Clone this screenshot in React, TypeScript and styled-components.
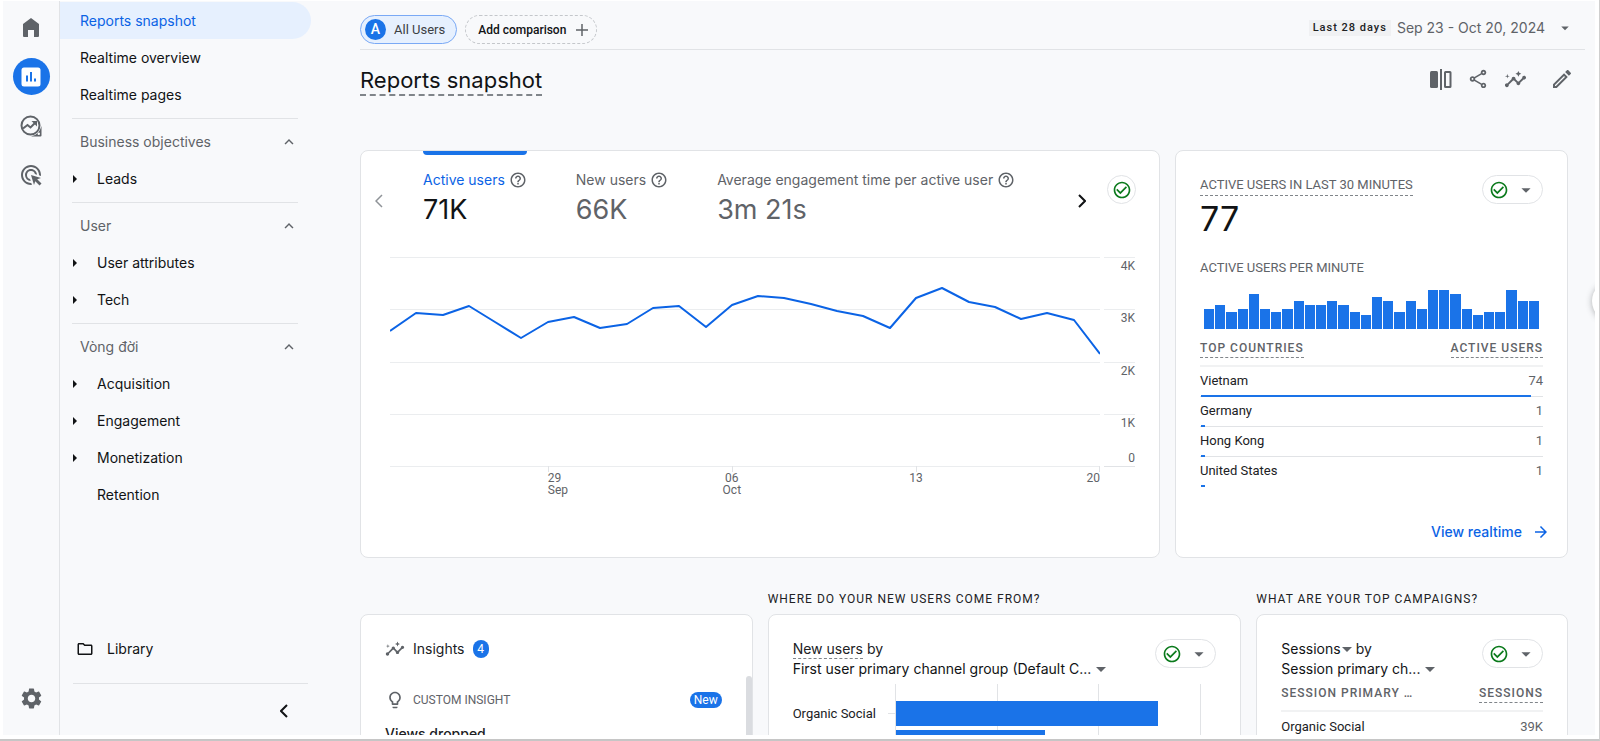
import React from "react";
import styled, { createGlobalStyle, css } from "styled-components";
import {
  MdAdsClick,
  MdArrowDropDown,
  MdArrowForward,
  MdCheckCircleOutline,
  MdExpandLess,
  MdHelpOutline,
  MdInsights,
  MdOutlineEdit,
  MdOutlineFolder,
  MdOutlineLightbulb,
  MdOutlineShare,
  MdSettings,
} from "react-icons/md";

const sans = `Inter, "Open Sans", sans-serif`;
const roboto = `Roboto, "Noto Sans", sans-serif`;

const color = {
  page: "#f8f9fb",
  ink: "#111315",
  text: "#202124",
  muted: "#5f6368",
  line: "#e1e3e6",
  faint: "#ebedef",
  blue: "#1a73e8",
  link: "#0b63e5",
  tint: "#e6f0fe",
  green: "#0b7a1c",
};

const GlobalStyle = createGlobalStyle`
  *, *::before, *::after { box-sizing: border-box; }
  body { margin: 0; background: #fff; }
  button { font: inherit; color: inherit; background: none; border: 0; padding: 0; cursor: pointer; }
  a { color: inherit; text-decoration: none; }
  h1, h2, h3, p, ul { margin: 0; padding: 0; font-weight: 400; list-style: none; }
  svg { display: block; flex: none; }
`;

/* ---------- frame ---------- */

const Frame = styled.div`
  height: 100vh;
  padding: 1px 4px 4px 3px;
  border-right: 1px solid #cfcfcf;
  border-bottom: 2px solid #c6c6c6;
  background: #fff;
`;

const Shell = styled.div`
  position: relative;
  display: flex;
  height: 100%;
  overflow: hidden;
  background: ${color.page};
  color: ${color.text};
  font: 400 14px/20px ${sans};
`;

/* ---------- icon rail ---------- */

const Rail = styled.nav`
  flex: none;
  width: 57px;
  display: flex;
  flex-direction: column;
  align-items: center;
  gap: 12px;
  padding: 8px 0 18px;
  border-right: 1px solid ${color.line};
`;

const RailButton = styled.button<{ $active?: boolean; $last?: boolean }>`
  display: grid;
  place-items: center;
  width: 37px;
  height: 37px;
  border-radius: 50%;
  color: ${(p) => (p.$active ? "#fff" : color.muted)};
  background: ${(p) => (p.$active ? color.blue : "transparent")};
  ${(p) => p.$last && css`margin-top: auto;`}
`;

/* ---------- side navigation ---------- */

const Side = styled.nav`
  flex: none;
  width: 251px;
  display: flex;
  flex-direction: column;
  padding-top: 1px;
  color: ${color.ink};
`;

const NavLink = styled.a<{ $active?: boolean }>`
  display: flex;
  align-items: center;
  height: 37px;
  padding-left: 20px;
  border-radius: 0 19px 19px 0;
  color: ${(p) => (p.$active ? color.link : "inherit")};
  background: ${(p) => (p.$active ? color.tint : "transparent")};
`;

const Group = styled.section`
  margin: 5px 13px 0 12px;
  padding-top: 4px;
  border-top: 1px solid ${color.line};
`;

const GroupHeader = styled.button`
  display: flex;
  align-items: center;
  justify-content: space-between;
  width: 100%;
  height: 37px;
  padding: 0 0 0 8px;
  color: ${color.muted};
`;

const GroupItem = styled.button<{ $leaf?: boolean }>`
  display: flex;
  align-items: center;
  gap: 20px;
  width: 100%;
  height: 37px;
  padding-left: 1px;
  &::before {
    content: "";
    border: 4px solid transparent;
    border-left-color: ${(p) => (p.$leaf ? "transparent" : color.ink)};
    border-right-width: 0;
  }
`;

const SideFoot = styled.div`
  display: flex;
  flex-direction: column;
  margin: auto 3px 0 13px;
`;

const Library = styled.a`
  display: flex;
  align-items: center;
  gap: 13px;
  height: 37px;
  margin-bottom: 16px;
  padding-left: 3px;
`;

const Collapse = styled.button`
  display: flex;
  justify-content: flex-end;
  align-items: center;
  height: 52px;
  padding: 3px 20px 0 0;
  border-top: 1px solid ${color.line};
`;

/* ---------- main column ---------- */

const Main = styled.main`
  flex: 1;
  min-width: 0;
  padding-left: 49px;
`;

const CompareBar = styled.div`
  display: flex;
  align-items: center;
  gap: 8px;
  height: 49px;
  margin-right: 10px;
  padding: 9px 11px 0 0;
  border-bottom: 1px solid ${color.line};
`;

const Chip = styled.button<{ $dashed?: boolean }>`
  display: flex;
  align-items: center;
  gap: 8px;
  height: 29px;
  padding: ${(p) => (p.$dashed ? "0 6px 0 12px" : "0 11px 0 4px")};
  border: 1px ${(p) => (p.$dashed ? "dashed #c4c7cb" : "solid #7aa9f5")};
  border-radius: 15px;
  background: ${(p) => (p.$dashed ? "transparent" : color.tint)};
  font: ${(p) => (p.$dashed ? "500 12px" : "400 13px")} / 20px ${roboto};
  color: ${(p) => (p.$dashed ? color.ink : "#3c4043")};
`;

const ChipBadge = styled.span`
  width: 21px;
  height: 21px;
  border-radius: 50%;
  background: ${color.blue};
  color: #fff;
  font: 500 14px/21px ${roboto};
  text-align: center;
`;

const DatePicker = styled.button`
  display: flex;
  align-items: center;
  gap: 6px;
  margin: -3px 0 0 auto;
  color: ${color.muted};
`;

const DateTag = styled.span`
  padding: 0 4px;
  background: #f0f1f3;
  color: ${color.text};
  font: 500 11px/16px ${roboto};
  letter-spacing: 1px;
`;

const DateRange = styled.span`
  margin-right: 5px;
`;

const TitleRow = styled.header`
  display: flex;
  align-items: flex-start;
  justify-content: space-between;
  height: 100px;
  margin-right: 21px;
  padding-top: 16px;
`;

const Title = styled.h1`
  border-bottom: 2px dashed #80858a;
  color: ${color.ink};
  font: 400 22px/28px ${sans};
`;

const Tools = styled.div`
  display: flex;
  align-items: center;
  gap: 13px;
  height: 26px;
  color: ${color.muted};
`;

const ToolButton = styled.button<{ $apart?: boolean }>`
  display: grid;
  place-items: center;
  width: 24px;
  height: 24px;
  ${(p) => p.$apart && css`margin-left: 10px;`}
`;

const Row = styled.div<{ $cols: string }>`
  display: grid;
  grid-template-columns: ${(p) => p.$cols};
  gap: 15px;
  margin-right: 27px;
`;

const Card = styled.section`
  display: flex;
  flex-direction: column;
  min-width: 0;
  overflow: hidden;
  border: 1px solid ${color.line};
  border-radius: 8px;
  background: #fff;
`;

/* ---------- overview card ---------- */

const OverviewCard = styled(Card)`
  min-height: 408px;
`;

const MetricBar = styled.div`
  display: flex;
  padding: 0 23px 0 14px;
`;

const Pager = styled.button<{ $dim?: boolean }>`
  align-self: flex-start;
  margin-top: 43px;
  color: ${(p) => (p.$dim ? "#8f9398" : color.ink)};
`;

const Tabs = styled.div`
  flex: 1;
  display: flex;
  gap: 49px;
  padding-left: 40px;
`;

const Metric = styled.button<{ $active?: boolean }>`
  display: flex;
  flex-direction: column;
  align-items: stretch;
  color: ${(p) => (p.$active ? color.link : color.muted)};
  &::before {
    content: "";
    height: 4px;
    border-radius: 0 0 4px 4px;
    background: ${(p) => (p.$active ? color.blue : "transparent")};
  }
`;

const MetricLabel = styled.span`
  display: flex;
  align-items: center;
  gap: 4px;
  padding-top: 15px;
  white-space: nowrap;
  svg { color: ${color.muted}; }
`;

const MetricValue = styled.span<{ $active?: boolean }>`
  padding-top: 2px;
  color: ${(p) => (p.$active ? color.ink : color.muted)};
  font: 400 27px/36px ${sans};
  text-align: left;
`;

const Status = styled.button<{ $menu?: boolean }>`
  flex: none;
  display: flex;
  align-items: center;
  justify-content: ${(p) => (p.$menu ? "space-between" : "center")};
  width: ${(p) => (p.$menu ? 61 : 29)}px;
  height: 29px;
  padding: ${(p) => (p.$menu ? "0 5px 0 6px" : 0)};
  border: 1px solid ${color.line};
  border-radius: 15px;
  color: ${color.muted};
  svg:first-child { color: ${color.green}; }
`;

const StatusSlot = styled.div`
  padding: 24px 0 0 21px;
`;

const Chart = styled.div`
  display: grid;
  grid-template-columns: 1fr 31px;
  column-gap: 4px;
  margin-top: 29px;
  padding: 0 24px 0 29px;
  color: ${color.muted};
  font: 400 12px/16px ${roboto};
`;

const Plot = styled.svg`
  width: 100%;
  height: 215px;
`;

const YAxis = styled.div`
  display: grid;
  grid-template-rows: repeat(4, 1fr);
  height: 210px;
  border-bottom: 1px solid ${color.line};
`;

const YTick = styled.div`
  display: flex;
  flex-direction: column;
  justify-content: space-between;
  border-top: 1px solid ${color.faint};
  text-align: right;
`;

const XAxis = styled.div`
  display: grid;
  grid-template-columns: 12fr 7fr 14fr 14fr 7fr;
  line-height: 12px;
`;

const XTick = styled.span<{ $align: string }>`
  text-align: ${(p) => p.$align};
`;

/* ---------- realtime card ---------- */

const RealtimeCard = styled(Card)`
  padding: 24px 24px 0 24px;
`;

const CardTop = styled.div`
  display: flex;
  justify-content: space-between;
  align-items: flex-start;
`;

const dashedUnder = css`
  border-bottom: 1px dashed #80858a;
`;

const Caption = styled.h2<{ $dashed?: boolean }>`
  color: ${color.muted};
  font: 400 13px/20px ${roboto};
  white-space: nowrap;
  ${(p) => p.$dashed && dashedUnder}
`;

const BigNumber = styled.p`
  margin-bottom: 16px;
  color: ${color.ink};
  font: 400 34px/46px ${sans};
`;

const Bars = styled.div`
  display: flex;
  align-items: flex-end;
  gap: 1px;
  height: 40px;
  margin: 11px 4px 10px;
`;

const Bar = styled.span`
  flex: 1;
  background: ${color.blue};
`;

const DataTable = styled.table`
  width: 100%;
  border-collapse: collapse;
  font: 400 13px/18px ${roboto};
  tr { position: relative; }
  td { height: 30px; padding: 0; }
  tbody tr + tr { border-top: 1px solid ${color.line}; }
  thead tr { border-bottom: 2px solid #f1f2f3; }
  td:last-child, th:last-child { text-align: right; }
`;

const HeadCell = styled.th`
  height: 27px;
  padding: 0;
  text-align: left;
  vertical-align: top;
  color: ${color.muted};
  font: 500 12px/18px ${roboto};
  letter-spacing: 1px;
`;

const HeadText = styled.span<{ $dashed?: boolean }>`
  display: inline-block;
  ${(p) => p.$dashed && dashedUnder}
`;

const ShareBar = styled.i`
  position: absolute;
  left: 1px;
  bottom: -1px;
  height: 2px;
  background: ${color.blue};
`;

const Numeric = styled.td`
  color: ${color.muted};
`;

const MoreLink = styled.a`
  display: flex;
  align-items: center;
  gap: 10px;
  align-self: flex-end;
  margin: auto -7px 15px 0;
  color: ${color.link};
  font-weight: 500;
`;

/* ---------- lower row ---------- */

const Column = styled.div`
  display: flex;
  flex-direction: column;
  min-width: 0;
`;

const ColumnTitle = styled.h2`
  height: 56px;
  padding-top: 31px;
  color: ${color.text};
  font: 400 12px/20px ${roboto};
  letter-spacing: 1px;
  white-space: nowrap;
`;

const LowerCard = styled(Card)`
  height: 300px;
  padding: 24px 24px 0;
`;

const InsightHead = styled.div`
  display: flex;
  align-items: center;
  gap: 8px;
  height: 20px;
  color: ${color.text};
  svg { color: ${color.muted}; }
`;

const Pill = styled.span<{ $wide?: boolean }>`
  min-width: 16px;
  padding: ${(p) => (p.$wide ? "0 4px" : "1px 0")};
  border-radius: 9px;
  background: ${color.blue};
  color: #fff;
  font: 400 12px/16px ${roboto};
  text-align: center;
`;

const InsightRow = styled.div`
  display: flex;
  align-items: center;
  justify-content: space-between;
  margin-top: 31px;
  padding-right: 6px;
`;

const InsightKind = styled.span`
  display: flex;
  align-items: center;
  gap: 8px;
  color: ${color.muted};
  font: 400 12px/20px ${roboto};
`;

const InsightTitle = styled.h3`
  margin-top: 14px;
  font: 500 14px/20px ${sans};
`;

const InsightsCard = styled(LowerCard)`
  position: relative;
`;

const ScrollThumb = styled.div`
  position: absolute;
  top: 61px;
  right: 0;
  bottom: 0;
  width: 6px;
  border-radius: 3px;
  background: #dadce0;
`;

const Heading = styled.div`
  min-width: 0;
  margin-bottom: 5px;
  white-space: nowrap;
  color: ${color.text};
`;

const HeadingLine = styled.div`
  display: flex;
  align-items: flex-start;
  gap: 4px;
  height: 20px;
`;

const Picker = styled.button<{ $tight?: boolean }>`
  display: flex;
  align-items: center;
  gap: ${(p) => (p.$tight ? 1 : 5)}px;
  color: ${color.ink};
  &::after {
    content: "";
    border: 5px solid transparent;
    border-top-color: ${color.muted};
    border-bottom-width: 0;
  }
`;

const Dashed = styled.span`
  line-height: 19px;
  ${dashedUnder}
`;

const BarChart = styled.div`
  display: grid;
  grid-template-columns: 95px 7px 1fr;
  font: 400 13px/18px ${roboto};
`;

const BarLabel = styled.span`
  padding-top: 21px;
  white-space: nowrap;
`;

const BarTick = styled.span`
  height: 30px;
  border-bottom: 1px solid ${color.line};
`;

const Lanes = styled.div`
  display: flex;
  flex-direction: column;
  gap: 4px;
  height: 200px;
  margin-right: 15px;
  padding-top: 17px;
  border-left: 1px solid ${color.line};
  border-right: 1px solid ${color.line};
  background: linear-gradient(${color.line}, ${color.line}) 33.3% 0 / 1px 100% no-repeat,
    linear-gradient(${color.line}, ${color.line}) 66.6% 0 / 1px 100% no-repeat;
`;

const Lane = styled.span`
  height: 25px;
  background: ${color.blue};
`;

const SideTab = styled.button`
  position: absolute;
  top: 280px;
  right: -37px;
  width: 40px;
  height: 40px;
  border-radius: 50%;
  background: #fff;
  box-shadow: 0 1px 6px rgba(60, 64, 67, 0.4);
`;

/* ---------- drawn icons ---------- */

const HomeIcon = () => (
  <svg width="18" height="19" viewBox="0 0 18 19" fill="currentColor">
    <path d="M9 0 1 6v12q0 1 1 1h4v-7h6v7h4q1 0 1-1V6z" />
  </svg>
);

const ReportIcon = () => (
  <svg width="20" height="20" viewBox="0 0 20 20">
    <rect x="0.500" y="0.500" width="19" height="19" rx="2.500" fill="#fff" />
    <path d="M6 8.500v6M10 5v9.500M14 11.500v3" stroke={color.blue} strokeWidth="2" />
  </svg>
);

const ExploreIcon = () => (
  <svg width="22" height="22" viewBox="0 0 22 22" fill="none" stroke="currentColor" strokeWidth="2">
    <circle cx="10.500" cy="10.500" r="9" />
    <path d="M21.500 11v9.500q0 1-1 1H11q8-1.500 10.500-10.500z" fill="currentColor" stroke="none" />
    <path d="M3 13.500 7.500 10l3 2.500 5-5" />
    <path d="M11.500 6h5.500v5.500z" fill="currentColor" stroke="none" />
    <circle cx="18.800" cy="18.800" r="1.200" fill="#fff" stroke="none" />
  </svg>
);

const CompareIcon = () => (
  <svg width="22" height="21" viewBox="0 0 22 21" fill="none" stroke="currentColor" strokeWidth="2">
    <rect x="0" y="2" width="8" height="17" rx="1.500" fill="currentColor" stroke="none" />
    <path d="M11 0v21" />
    <rect x="15" y="3" width="5.500" height="15" rx="0.500" />
  </svg>
);

const Chevron = ({ left, bold }: { left?: boolean; bold?: boolean }) => (
  <svg width="8" height="14" viewBox="0 0 8 14" fill="none" stroke="currentColor" strokeWidth={bold ? 2 : 1.500}>
    <path d={left ? "M7 1 1 7l6 6" : "M1 1l6 6-6 6"} />
  </svg>
);

const PlusIcon = () => (
  <svg width="16" height="16" viewBox="0 0 16 16" stroke={color.muted} strokeWidth="1.500">
    <path d="M8 2v12M2 8h12" />
  </svg>
);

/* ---------- data ---------- */

const groups = [
  { title: "Business objectives", items: ["Leads"] },
  { title: "User", items: ["User attributes", "Tech"] },
  { title: "Vòng đời", items: ["Acquisition", "Engagement", "Monetization", "Retention"] },
];

const metrics = [
  { label: "Active users", value: "71K" },
  { label: "New users", value: "66K" },
  { label: "Average engagement time per active user", value: "3m 21s" },
];

const daily = [
  74, 56, 58, 49, 65, 81, 65, 60, 71, 67, 51, 49, 70, 48, 39, 41, 47, 54, 59, 71, 41, 31, 45, 50, 62, 56, 63, 97,
];

const perMinute = [
  20, 24, 17, 20, 35, 20, 17, 20, 28, 24, 24, 28, 24, 17, 14, 32, 28, 17, 28, 20, 39, 39, 35, 20, 14, 17, 17, 39, 28,
  28,
];

const countries = [
  { name: "Vietnam", users: 74 },
  { name: "Germany", users: 1 },
  { name: "Hong Kong", users: 1 },
  { name: "United States", users: 1 },
];

const campaigns = [{ name: "Organic Social", sessions: "39K" }];

/* ---------- parts ---------- */

const StatusMenu = () => (
  <Status $menu aria-label="Data quality">
    <MdCheckCircleOutline size={20} />
    <MdArrowDropDown size={22} />
  </Status>
);

function TrendChart() {
  const step = 710 / (daily.length - 1);
  const points = daily.map((y, i) => `${Math.round(i * step)},${y}`).join(" ");
  return (
    <Chart>
      <Plot viewBox="0 0 710 215" preserveAspectRatio="none" role="img" aria-label="Active users by day">
        {[0, 52, 105, 157, 209].map((y) => (
          <rect key={y} x="0" y={y} width="710" height="1" fill={color.faint} />
        ))}
        {[6, 13, 20, 27].map((day) => (
          <rect key={day} x={Math.min(709, Math.round(day * step))} y="209" width="1" height="6" fill={color.line} />
        ))}
        <polyline
          points={points}
          fill="none"
          stroke={color.link}
          strokeWidth="2"
          strokeLinejoin="round"
          vectorEffect="non-scaling-stroke"
        />
      </Plot>
      <YAxis>
        <YTick>4K</YTick>
        <YTick>3K</YTick>
        <YTick>2K</YTick>
        <YTick>
          <span>1K</span>
          <span>0</span>
        </YTick>
      </YAxis>
      <XAxis>
        <span />
        <XTick $align="left">
          29
          <br />
          Sep
        </XTick>
        <XTick $align="center">
          06
          <br />
          Oct
        </XTick>
        <XTick $align="center">13</XTick>
        <XTick $align="right">20</XTick>
      </XAxis>
    </Chart>
  );
}

export default function App() {
  return (
    <Frame>
      <GlobalStyle />
      <Shell>
        <Rail aria-label="Products">
          <RailButton aria-label="Home">
            <HomeIcon />
          </RailButton>
          <RailButton $active aria-label="Reports">
            <ReportIcon />
          </RailButton>
          <RailButton aria-label="Explore">
            <ExploreIcon />
          </RailButton>
          <RailButton aria-label="Advertising">
            <MdAdsClick size={24} />
          </RailButton>
          <RailButton $last aria-label="Admin">
            <MdSettings size={25} />
          </RailButton>
        </Rail>

        <Side aria-label="Reports">
          <NavLink href="#" $active>
            Reports snapshot
          </NavLink>
          <NavLink href="#">Realtime overview</NavLink>
          <NavLink href="#">Realtime pages</NavLink>
          {groups.map((group) => (
            <Group key={group.title}>
              <GroupHeader>
                {group.title}
                <MdExpandLess size={18} />
              </GroupHeader>
              {group.items.map((item) => (
                <GroupItem key={item} $leaf={item === "Retention"}>
                  {item}
                </GroupItem>
              ))}
            </Group>
          ))}
          <SideFoot>
            <Library href="#">
              <MdOutlineFolder size={18} />
              Library
            </Library>
            <Collapse aria-label="Collapse navigation">
              <Chevron left bold />
            </Collapse>
          </SideFoot>
        </Side>

        <Main>
          <CompareBar>
            <Chip>
              <ChipBadge>A</ChipBadge>
              All Users
            </Chip>
            <Chip $dashed>
              Add comparison
              <PlusIcon />
            </Chip>
            <DatePicker>
              <DateTag>Last 28 days</DateTag>
              <DateRange>Sep 23 - Oct 20, 2024</DateRange>
              <MdArrowDropDown size={18} />
            </DatePicker>
          </CompareBar>

          <TitleRow>
            <Title>Reports snapshot</Title>
            <Tools>
              <ToolButton aria-label="Edit comparisons">
                <CompareIcon />
              </ToolButton>
              <ToolButton aria-label="Share this report">
                <MdOutlineShare size={22} />
              </ToolButton>
              <ToolButton aria-label="Insights">
                <MdInsights size={23} />
              </ToolButton>
              <ToolButton $apart aria-label="Customize report">
                <MdOutlineEdit size={24} />
              </ToolButton>
            </Tools>
          </TitleRow>

          <Row $cols="800fr 393fr">
            <OverviewCard>
              <MetricBar>
                <Pager $dim aria-label="Previous metrics">
                  <Chevron left />
                </Pager>
                <Tabs>
                  {metrics.map((metric, i) => (
                    <Metric key={metric.label} $active={i === 0}>
                      <MetricLabel>
                        {metric.label}
                        <MdHelpOutline size={18} />
                      </MetricLabel>
                      <MetricValue $active={i === 0}>{metric.value}</MetricValue>
                    </Metric>
                  ))}
                </Tabs>
                <Pager aria-label="Next metrics">
                  <Chevron bold />
                </Pager>
                <StatusSlot>
                  <Status aria-label="Data quality">
                    <MdCheckCircleOutline size={20} />
                  </Status>
                </StatusSlot>
              </MetricBar>
              <TrendChart />
            </OverviewCard>

            <RealtimeCard>
              <CardTop>
                <div>
                  <Caption $dashed>ACTIVE USERS IN LAST 30 MINUTES</Caption>
                  <BigNumber>77</BigNumber>
                </div>
                <StatusMenu />
              </CardTop>
              <Caption>ACTIVE USERS PER MINUTE</Caption>
              <Bars role="img" aria-label="Active users per minute">
                {perMinute.map((h, i) => (
                  <Bar key={i} style={{ height: h }} />
                ))}
              </Bars>
              <DataTable>
                <thead>
                  <tr>
                    <HeadCell scope="col">
                      <HeadText $dashed>TOP COUNTRIES</HeadText>
                    </HeadCell>
                    <HeadCell scope="col">
                      <HeadText $dashed>ACTIVE USERS</HeadText>
                    </HeadCell>
                  </tr>
                </thead>
                <tbody>
                  {countries.map((c) => (
                    <tr key={c.name}>
                      <td>
                        {c.name}
                        <ShareBar style={{ width: `${(c.users / 77) * 100}%` }} />
                      </td>
                      <Numeric>{c.users}</Numeric>
                    </tr>
                  ))}
                </tbody>
              </DataTable>
              <MoreLink href="#">
                View realtime
                <MdArrowForward size={18} />
              </MoreLink>
            </RealtimeCard>
          </Row>

          <Row $cols="393fr 474fr 312fr">
            <Column>
              <ColumnTitle as="div" />
              <InsightsCard>
                <InsightHead>
                  <MdInsights size={20} />
                  Insights
                  <Pill>4</Pill>
                </InsightHead>
                <InsightRow>
                  <InsightKind>
                    <MdOutlineLightbulb size={20} />
                    CUSTOM INSIGHT
                  </InsightKind>
                  <Pill $wide>New</Pill>
                </InsightRow>
                <InsightTitle>Views dropped</InsightTitle>
                <ScrollThumb />
              </InsightsCard>
            </Column>

            <Column>
              <ColumnTitle>WHERE DO YOUR NEW USERS COME FROM?</ColumnTitle>
              <LowerCard>
                <CardTop>
                  <Heading>
                    <HeadingLine>
                      <Dashed>New users</Dashed>
                      <span>by</span>
                    </HeadingLine>
                    <Picker>First user primary channel group (Default C...</Picker>
                  </Heading>
                  <StatusMenu />
                </CardTop>
                <BarChart>
                  <BarLabel>Organic Social</BarLabel>
                  <BarTick />
                  <Lanes>
                    <Lane style={{ width: "86%" }} />
                    <Lane style={{ width: "49%" }} />
                  </Lanes>
                </BarChart>
              </LowerCard>
            </Column>

            <Column>
              <ColumnTitle>WHAT ARE YOUR TOP CAMPAIGNS?</ColumnTitle>
              <LowerCard>
                <CardTop>
                  <Heading>
                    <HeadingLine>
                      <Picker $tight>Sessions</Picker>
                      <span>by</span>
                    </HeadingLine>
                    <Picker>Session primary ch...</Picker>
                  </Heading>
                  <StatusMenu />
                </CardTop>
                <DataTable>
                  <thead>
                    <tr>
                      <HeadCell scope="col">SESSION PRIMARY …</HeadCell>
                      <HeadCell scope="col">
                        <HeadText $dashed>SESSIONS</HeadText>
                      </HeadCell>
                    </tr>
                  </thead>
                  <tbody>
                    {campaigns.map((c) => (
                      <tr key={c.name}>
                        <td>{c.name}</td>
                        <Numeric>{c.sessions}</Numeric>
                      </tr>
                    ))}
                  </tbody>
                </DataTable>
              </LowerCard>
            </Column>
          </Row>
        </Main>
        <SideTab aria-label="Open panel" />
      </Shell>
    </Frame>
  );
}
